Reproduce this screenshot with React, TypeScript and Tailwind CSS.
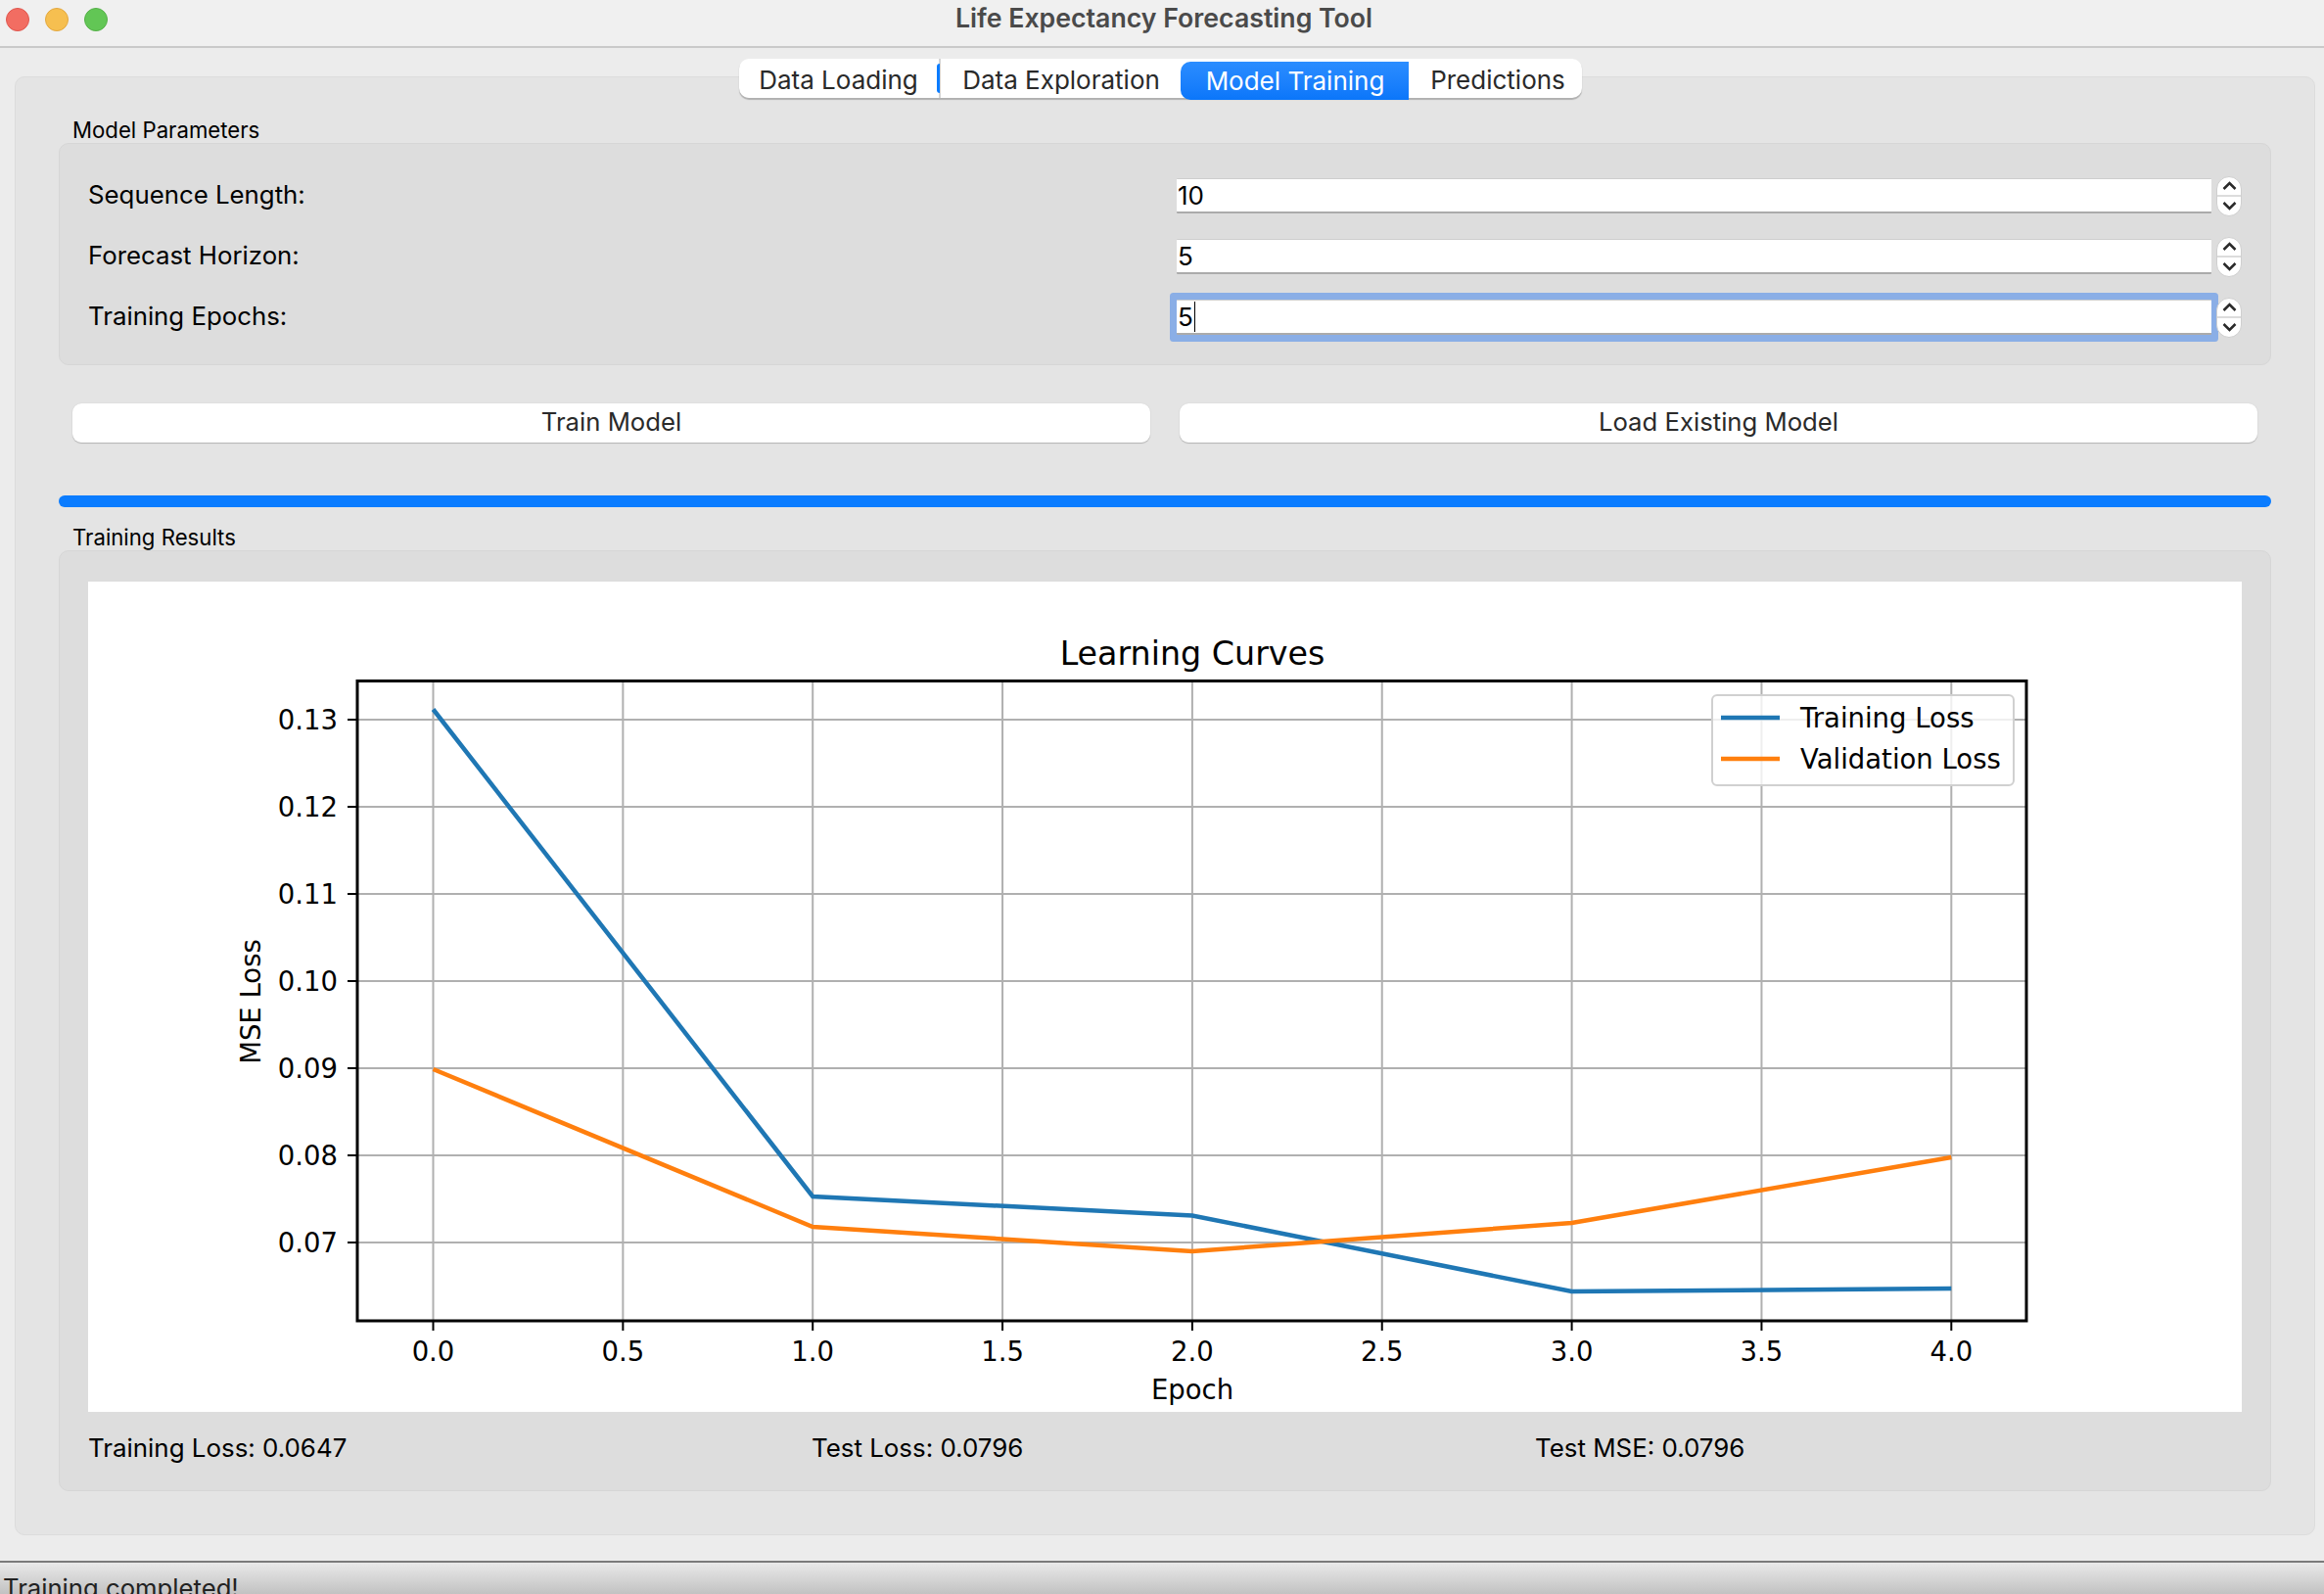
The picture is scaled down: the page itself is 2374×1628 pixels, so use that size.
const font = "font-['Inter','Liberation_Sans',sans-serif]";

const xTicks = ['0.0', '0.5', '1.0', '1.5', '2.0', '2.5', '3.0', '3.5', '4.0'];
const yTicks = ['0.13', '0.12', '0.11', '0.10', '0.09', '0.08', '0.07'];

// pixel positions read off the plot
const xPos = (i: number) => 442.5 + i * 193.85;
const yPos = (i: number) => 735 + i * 89;
const trainLoss = [724.5, 1222, 1241.5, 1319, 1316];
const valLoss = [1092, 1253, 1278, 1249, 1182];

const toPoints = (vals: number[]) => vals.map((y, i) => `${xPos(i * 2)},${y}`).join(' ');

function LossChart() {
  // viewBox uses page coordinates, chart's top-left is at (90, 594)
  return (
    <svg viewBox="90 594 2200 848" className="block h-[848px] w-full bg-white" style={{ fontFamily: "'DejaVu Sans', sans-serif" }}>
      {xTicks.map((_, i) => (
        <line key={i} x1={xPos(i)} x2={xPos(i)} y1={695} y2={1349} stroke="#b0b0b0" strokeWidth="2" />
      ))}
      {yTicks.map((_, i) => (
        <line key={i} x1={365} x2={2070} y1={yPos(i)} y2={yPos(i)} stroke="#b0b0b0" strokeWidth="2" />
      ))}
      <polyline points={toPoints(trainLoss)} fill="none" stroke="#1f77b4" strokeWidth="4.5" />
      <polyline points={toPoints(valLoss)} fill="none" stroke="#ff7f0e" strokeWidth="4.5" />
      <rect x={365} y={695.5} width={1705} height={653.5} fill="none" stroke="#000" strokeWidth="3" />
      {xTicks.map((t, i) => (
        <g key={t}>
          <line x1={xPos(i)} x2={xPos(i)} y1={1349} y2={1359} stroke="#000" strokeWidth="2" />
          <text x={xPos(i)} y={1389.5} fontSize="27.5" textAnchor="middle" fill="#000">{t}</text>
        </g>
      ))}
      {yTicks.map((t, i) => (
        <g key={t}>
          <line x1={355} x2={365} y1={yPos(i)} y2={yPos(i)} stroke="#000" strokeWidth="2" />
          <text x={345} y={yPos(i) + 10} fontSize="27.5" textAnchor="end" fill="#000">{t}</text>
        </g>
      ))}
      <text x={1218} y={678.5} fontSize="33.3" textAnchor="middle" fill="#000">Learning Curves</text>
      <text x={1218} y={1429} fontSize="27.5" textAnchor="middle" fill="#000">Epoch</text>
      <text x={266} y={1023} fontSize="27.5" textAnchor="middle" fill="#000" transform="rotate(-90 266 1023)">MSE Loss</text>
      <rect x={1749} y={710} width={308} height={92} rx={5} fill="#fff" fillOpacity="0.8" stroke="#d0d0d0" strokeWidth="2" />
      <line x1={1758} x2={1818} y1={733} y2={733} stroke="#1f77b4" strokeWidth="4.5" />
      <line x1={1758} x2={1818} y1={775} y2={775} stroke="#ff7f0e" strokeWidth="4.5" />
      <text x={1839} y={743} fontSize="27.5" fill="#000">Training Loss</text>
      <text x={1839} y={785} fontSize="27.5" fill="#000">Validation Loss</text>
    </svg>
  );
}

function Stepper() {
  return (
    <div className="relative z-10 ml-[5px] flex h-[41px] w-[26px] shrink-0 flex-col rounded-[13px] border border-[#cfcfcf] bg-white">
      <div className="flex flex-1 items-center justify-center border-b-2 border-[#dcdcdc]">
        <svg width="15" height="9" viewBox="0 0 15 9">
          <path d="M1.5 8 L7.5 2 L13.5 8" fill="none" stroke="#2a2a2a" strokeWidth="2.5" />
        </svg>
      </div>
      <div className="flex flex-1 items-center justify-center">
        <svg width="15" height="9" viewBox="0 0 15 9">
          <path d="M1.5 1 L7.5 7 L13.5 1" fill="none" stroke="#2a2a2a" strokeWidth="2.5" />
        </svg>
      </div>
    </div>
  );
}

function ParamRow({ label, value, focused }: { label: string; value: string; focused?: boolean }) {
  return (
    <div className="flex h-[36px] items-center">
      <div className="-mt-[2px] w-[1112px] shrink-0 text-[25.8px] text-black">{label}</div>
      <div
        className={`flex h-[36px] flex-1 items-center rounded-[1px] border-t border-b-2 border-t-[#cdcdcd] border-b-[#ababab] bg-white pl-[1px] text-[26px] text-black ${
          focused ? 'shadow-[0_0_0_7px_#8aaee6]' : ''
        }`}
      >
        {value}
        {focused && <span className="ml-px h-[31px] w-px bg-black" />}
      </div>
      <Stepper />
    </div>
  );
}

function Tabs() {
  return (
    <div className="relative z-10 mt-[11px] flex h-[42px] justify-center pr-[4px]">
      <div className="flex h-[40px] items-start rounded-[10px] bg-white text-[26px] text-[#2a2a2a] shadow-[0_1.5px_1px_#b0b0b0]">
        <div className="flex h-[40px] w-[204px] items-center justify-center pt-[2px]">Data Loading</div>
        <div className="flex h-[40px] w-[247px] items-center border-l-2 border-[#d4d4d4]">
          <span className="-ml-[4px] h-[30px] w-[3px] rounded-l-full bg-[#0a7cff]" />
          <span className="flex-1 pl-[3px] pt-[2px] text-center">Data Exploration</span>
        </div>
        <div className="mt-[3px] flex h-[39px] w-[233px] items-center justify-center rounded-l-[10px] bg-gradient-to-b from-[#2b8dff] to-[#0a76fa] pl-[2px] text-white">
          Model Training
        </div>
        <div className="flex h-[40px] w-[177px] items-center justify-center pl-[6px] pt-[2px]">Predictions</div>
      </div>
    </div>
  );
}

export default function App() {
  return (
    <div className={`${font} flex h-[1628px] flex-col overflow-hidden bg-[#ececec]`}>
      {/* title bar */}
      <div className="relative flex h-[49px] shrink-0 items-center justify-center border-b-2 border-[#c9c9c9] bg-[#f0f0f0]">
        <div className="absolute left-[6px] top-[8px] flex gap-[16px]">
          <span className="h-[24px] w-[24px] rounded-full border border-[#e0564e] bg-[#f26d62]" />
          <span className="h-[24px] w-[24px] rounded-full border border-[#e3a83f] bg-[#f6bf50]" />
          <span className="h-[24px] w-[24px] rounded-full border border-[#54b048] bg-[#62c655]" />
        </div>
        <div className="pb-[10px] pl-[4px] text-[26.7px] font-semibold text-[#4a4a4a]">Life Expectancy Forecasting Tool</div>
      </div>

      <Tabs />

      {/* main panel, the tabs overlap its top edge */}
      <div className="mx-[15px] mt-[-24px] h-[1490px] w-[2350px] rounded-[10px] border border-[#dcdcdc] bg-[#e4e4e4] pl-[44px] pr-[44px] pt-[40px]">
        <div className="flex h-[27px] items-center pl-[14px] text-[22.2px] text-black">Model Parameters</div>
        <div className="flex h-[227px] flex-col gap-[26px] rounded-[10px] border border-[#d6d6d6] bg-[#dddddd] pl-[29px] pr-[29px] pt-[35px]">
          <ParamRow label="Sequence Length:" value="10" />
          <ParamRow label="Forecast Horizon:" value="5" />
          <ParamRow label="Training Epochs:" value="5" focused />
        </div>

        <div className="mt-[39px] flex gap-[30px] px-[14px]">
          <button className="h-[40px] flex-1 rounded-[9px] bg-white pb-[2px] text-[25.7px] text-[#2a2a2a] shadow-[0_1px_1px_#b4b4b4,0_0_1px_#c4c4c4]">Train Model</button>
          <button className="h-[40px] flex-1 rounded-[9px] bg-white pb-[2px] text-[25.7px] text-[#2a2a2a] shadow-[0_1px_1px_#b4b4b4,0_0_1px_#c4c4c4]">Load Existing Model</button>
        </div>

        <div className="mt-[54px] h-[12px] rounded-full bg-[#0a7cff]" />

        <div className="mt-[18px] flex h-[26px] items-center pl-[14px] text-[22.2px] text-black">Training Results</div>
        <div className="h-[961px] rounded-[10px] border border-[#d6d6d6] bg-[#dddddd] px-[29px] pt-[31px]">
          <LossChart />
          <div className="mt-[18px] grid grid-cols-3 gap-[17px] text-[25.9px] text-black">
            <div>Training Loss: 0.0647</div>
            <div>Test Loss: 0.0796</div>
            <div>Test MSE: 0.0796</div>
          </div>
        </div>
      </div>

      {/* status bar, cut off by the window's edge */}
      <div className="mt-[26px] h-[34px] shrink-0 border-t-2 border-[#7a7a7a] bg-gradient-to-b from-[#e9e9e9] to-[#c2c2c2] pl-[3px] pt-[11px] text-[25.7px] leading-[30px] text-[#222]">
        Training completed!
      </div>
    </div>
  );
}
